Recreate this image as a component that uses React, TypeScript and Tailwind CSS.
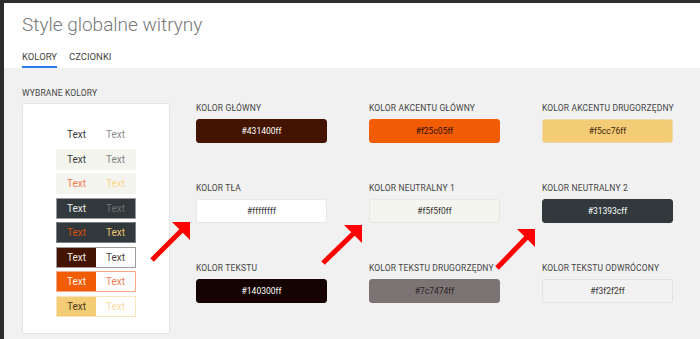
const swatches = [
  { label: "KOLOR GŁÓWNY", hex: "#431400ff", bg: "bg-[#431400]", text: "text-white", border: "border-[#431400]" },
  { label: "KOLOR AKCENTU GŁÓWNY", hex: "#f25c05ff", bg: "bg-[#f25c05]", text: "text-[#2a1000]", border: "border-[#f25c05]" },
  { label: "KOLOR AKCENTU DRUGORZĘDNY", hex: "#f5cc76ff", bg: "bg-[#f5cc76]", text: "text-[#3a2a10]", border: "border-[#ecd9b0]" },
  { label: "KOLOR TŁA", hex: "#ffffffff", bg: "bg-white", text: "text-[#333]", border: "border-[#e8e8e8]" },
  { label: "KOLOR NEUTRALNY 1", hex: "#f5f5f0ff", bg: "bg-[#f5f5f0]", text: "text-[#333]", border: "border-[#e6e6e2]" },
  { label: "KOLOR NEUTRALNY 2", hex: "#31393cff", bg: "bg-[#31393c]", text: "text-white", border: "border-[#31393c]" },
  { label: "KOLOR TEKSTU", hex: "#140300ff", bg: "bg-[#140300]", text: "text-white", border: "border-[#140300]" },
  { label: "KOLOR TEKSTU DRUGORZĘDNY", hex: "#7c7474ff", bg: "bg-[#7c7474]", text: "text-[#2a2424]", border: "border-[#7c7474]" },
  { label: "KOLOR TEKSTU ODWRÓCONY", hex: "#f3f2f2ff", bg: "bg-[#f3f2f2]", text: "text-[#333]", border: "border-[#e2e2e2]" },
];

type Row = {
  wrap: string;
  left: string;
  right: string;
};

const rows: Row[] = [
  { wrap: "border-transparent", left: "text-[#3a3a3a]", right: "text-[#8a8a8a]" },
  { wrap: "bg-[#f5f5f0] border-[#f5f5f0]", left: "text-[#3a3a3a]", right: "text-[#808080]" },
  { wrap: "bg-[#f5f5f0] border-[#f5f5f0]", left: "text-[#f47a50]", right: "text-[#f8d890]" },
  { wrap: "bg-[#31393c] border-[#9a9a9a]", left: "text-[#ececec]", right: "text-[#6e6e6e]" },
  { wrap: "bg-[#31393c] border-[#7a7f82]", left: "text-[#d9500a]", right: "text-[#e8c070]" },
  { wrap: "border-[#a09a9a]", left: "bg-[#431400] text-[#f3eeee]", right: "bg-white text-[#4a4040]" },
  { wrap: "border-[#f7a88a]", left: "bg-[#f25c05] text-[#fff0e8]", right: "bg-white text-[#f47a50]" },
  { wrap: "border-[#fbe5bd]", left: "bg-[#f5cc76] text-[#4a3a20]", right: "bg-white text-[#f8dca0]" },
];

const arrows = [
  { tx: 190, ty: 222, sx: 152, sy: 260 },
  { tx: 362, ty: 225, sx: 323, sy: 263 },
  { tx: 535, ty: 229, sx: 497, sy: 268 },
];

export default function App() {
  return (
    <div className="relative w-[700px] h-[339px] overflow-hidden bg-[#2d2d2d] pl-[4px] pt-[3px] font-['Roboto',sans-serif]">
      <div className="flex flex-col h-full bg-[#f1f1f1]">
        <div className="bg-white h-[65px] px-[18px] flex flex-col shrink-0">
          <h1 className="text-[19px] font-light text-[#777] leading-[24px] mt-[10px]">
            Style globalne witryny
          </h1>
          <div className="flex gap-[12px] mt-[11px] text-[9.5px] font-normal text-[#444]">
            <div className="flex flex-col">
              <span className="leading-[17px]">KOLORY</span>
              <div className="h-[2px] bg-[#2b7de9] mt-[1px]" />
            </div>
            <span className="leading-[17px]">CZCIONKI</span>
          </div>
        </div>

        <div className="flex flex-1 px-[18px]">
          <div className="w-[148px] pt-[19px]">
            <div className="text-[8.5px] font-normal text-[#444] leading-[12px] tracking-[0.15px]">WYBRANE KOLORY</div>
            <div className="mt-[4px] h-[231px] bg-white rounded-[3px] border border-[#e4e4e4] flex flex-col items-center pt-[20px] gap-[3.5px]">
              {rows.map((r, i) => (
                <div key={i} className={`flex w-[80px] h-[21px] border ${r.wrap} text-[10px] leading-[19px]`}>
                  <div className={`w-1/2 text-center ${r.left}`}>Text</div>
                  <div className={`w-1/2 text-center ${r.right}`}>Text</div>
                </div>
              ))}
            </div>
          </div>

          <div className="ml-[26px] pt-[34px] grid grid-cols-[131px_131px_131px] gap-x-[42px] gap-y-[39px] content-start">
            {swatches.map((s) => (
              <div key={s.label} className="flex flex-col">
                <div className="text-[8.5px] font-normal text-[#444] leading-[12px] tracking-[0.15px] whitespace-nowrap">{s.label}</div>
                <div className={`mt-[5px] h-[24px] rounded-[3px] border ${s.bg} ${s.border} ${s.text} flex items-center justify-center text-[8.5px] font-normal`}>
                  {s.hex}
                </div>
              </div>
            ))}
          </div>
        </div>
      </div>

      <svg className="absolute left-0 top-0 pointer-events-none" width="700" height="339" viewBox="0 0 700 339">
        {arrows.map((a, i) => (
          <g key={i} fill="#ff0000" stroke="#ff0000">
            <line x1={a.sx} y1={a.sy} x2={a.tx - 7} y2={a.ty + 7} strokeWidth="5" />
            <polygon points={`${a.tx - 18},${a.ty} ${a.tx},${a.ty} ${a.tx},${a.ty + 18}`} strokeWidth="0" />
          </g>
        ))}
      </svg>
    </div>
  );
}
